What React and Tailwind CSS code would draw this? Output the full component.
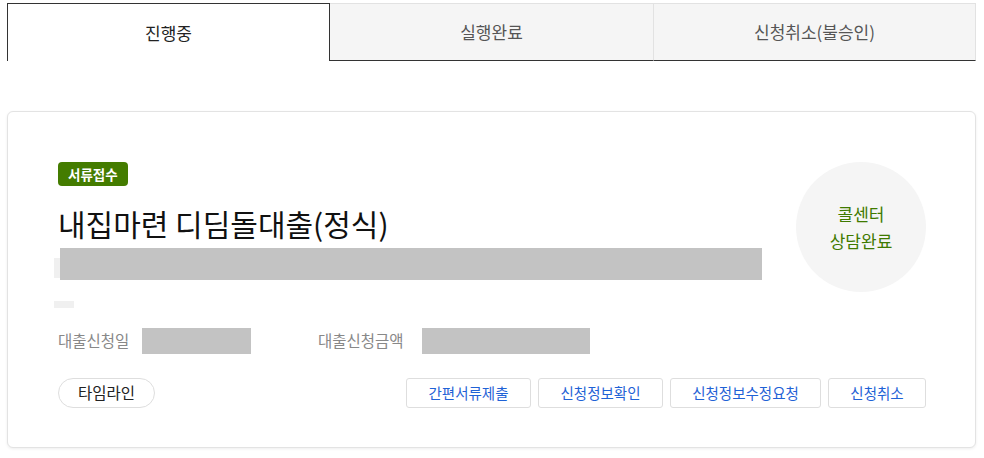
import React from "react";

const tabs = ["진행중", "실행완료", "신청취소(불승인)"];

const actions = [
  { label: "간편서류제출", w: "w-[125px]" },
  { label: "신청정보확인", w: "w-[125px]" },
  { label: "신청정보수정요청", w: "w-[151px]" },
  { label: "신청취소", w: "w-[98px]" },
];

const App = () => {
  return (
    <div className="min-h-[458px] bg-white pl-[7px] pr-[8px] pt-[3px] font-['Noto_Sans_CJK_KR','Noto_Sans',sans-serif]">
      {/* tabs */}
      <div className="grid grid-cols-3 h-[58px]">
        {tabs.map((tab, i) =>
          i === 0 ? (
            <div
              key={tab}
              className="flex items-center justify-center border-t border-l border-r border-[#333] bg-white text-[17px] text-[#222]"
            >
              {tab}
            </div>
          ) : (
            <div
              key={tab}
              className={`flex items-center justify-center border-t border-b border-t-[#e2e2e2] border-b-[#333] bg-[#f5f5f5] text-[17px] text-[#555] ${
                i === 2 ? "border-l border-r border-l-[#e2e2e2] border-r-[#e2e2e2]" : ""
              }`}
            >
              {tab}
            </div>
          )
        )}
      </div>

      {/* card */}
      <div className="mt-[50px] rounded-[6px] border border-[#e3e3e3] bg-white pl-[50px] pr-[49px] pt-[50px] pb-[39px] shadow-[0_1px_3px_rgba(0,0,0,0.07)]">
        <div className="flex items-start justify-between">
          <div className="flex flex-col">
            <div className="flex">
              <span className="flex h-[24px] items-center rounded-[4px] bg-[#447c00] px-[10px] text-[13.5px] font-bold text-white">
                서류접수
              </span>
            </div>
            <h2 className="mt-[19px] h-[36px] text-[30px] leading-[36px] text-[#111]">
              내집마련 디딤돌대출(정식)
            </h2>
            <div className="mt-[7px] ml-[-4px] flex items-start">
              <div className="mt-[10px] h-[20px] w-[6px] bg-[#f0f0f0]"></div>
              <div className="h-[32px] w-[702px] bg-[#c3c3c3]"></div>
            </div>
            <div className="mt-[21px] ml-[-4px] h-[7px] w-[20px] bg-[#f0f0f0]"></div>
          </div>

          <div className="flex h-[130px] w-[130px] flex-col items-center justify-center rounded-full bg-[#f5f5f5] text-[17px] leading-[27px] text-[#3f7a00]">
            <span>콜센터</span>
            <span>상담완료</span>
          </div>
        </div>

        {/* loan info */}
        <div className="mt-[20px] flex items-center text-[15.5px] text-[#888]">
          <span className="w-[84px]">대출신청일</span>
          <div className="h-[26px] w-[109px] bg-[#c3c3c3]"></div>
          <span className="ml-[67px] w-[104px]">대출신청금액</span>
          <div className="h-[26px] w-[168px] bg-[#c3c3c3]"></div>
        </div>

        {/* buttons */}
        <div className="mt-[24px] flex items-center justify-between">
          <button className="h-[30px] w-[97px] rounded-full border border-[#dedede] bg-white text-[15.5px] text-[#222]">
            타임라인
          </button>
          <div className="flex gap-[7px]">
            {actions.map((a) => (
              <button
                key={a.label}
                className={`h-[30px] ${a.w} rounded-[3px] border border-[#dedede] bg-white text-[14.5px] text-[#1f62d6]`}
              >
                {a.label}
              </button>
            ))}
          </div>
        </div>
      </div>
    </div>
  );
};

export default App;
